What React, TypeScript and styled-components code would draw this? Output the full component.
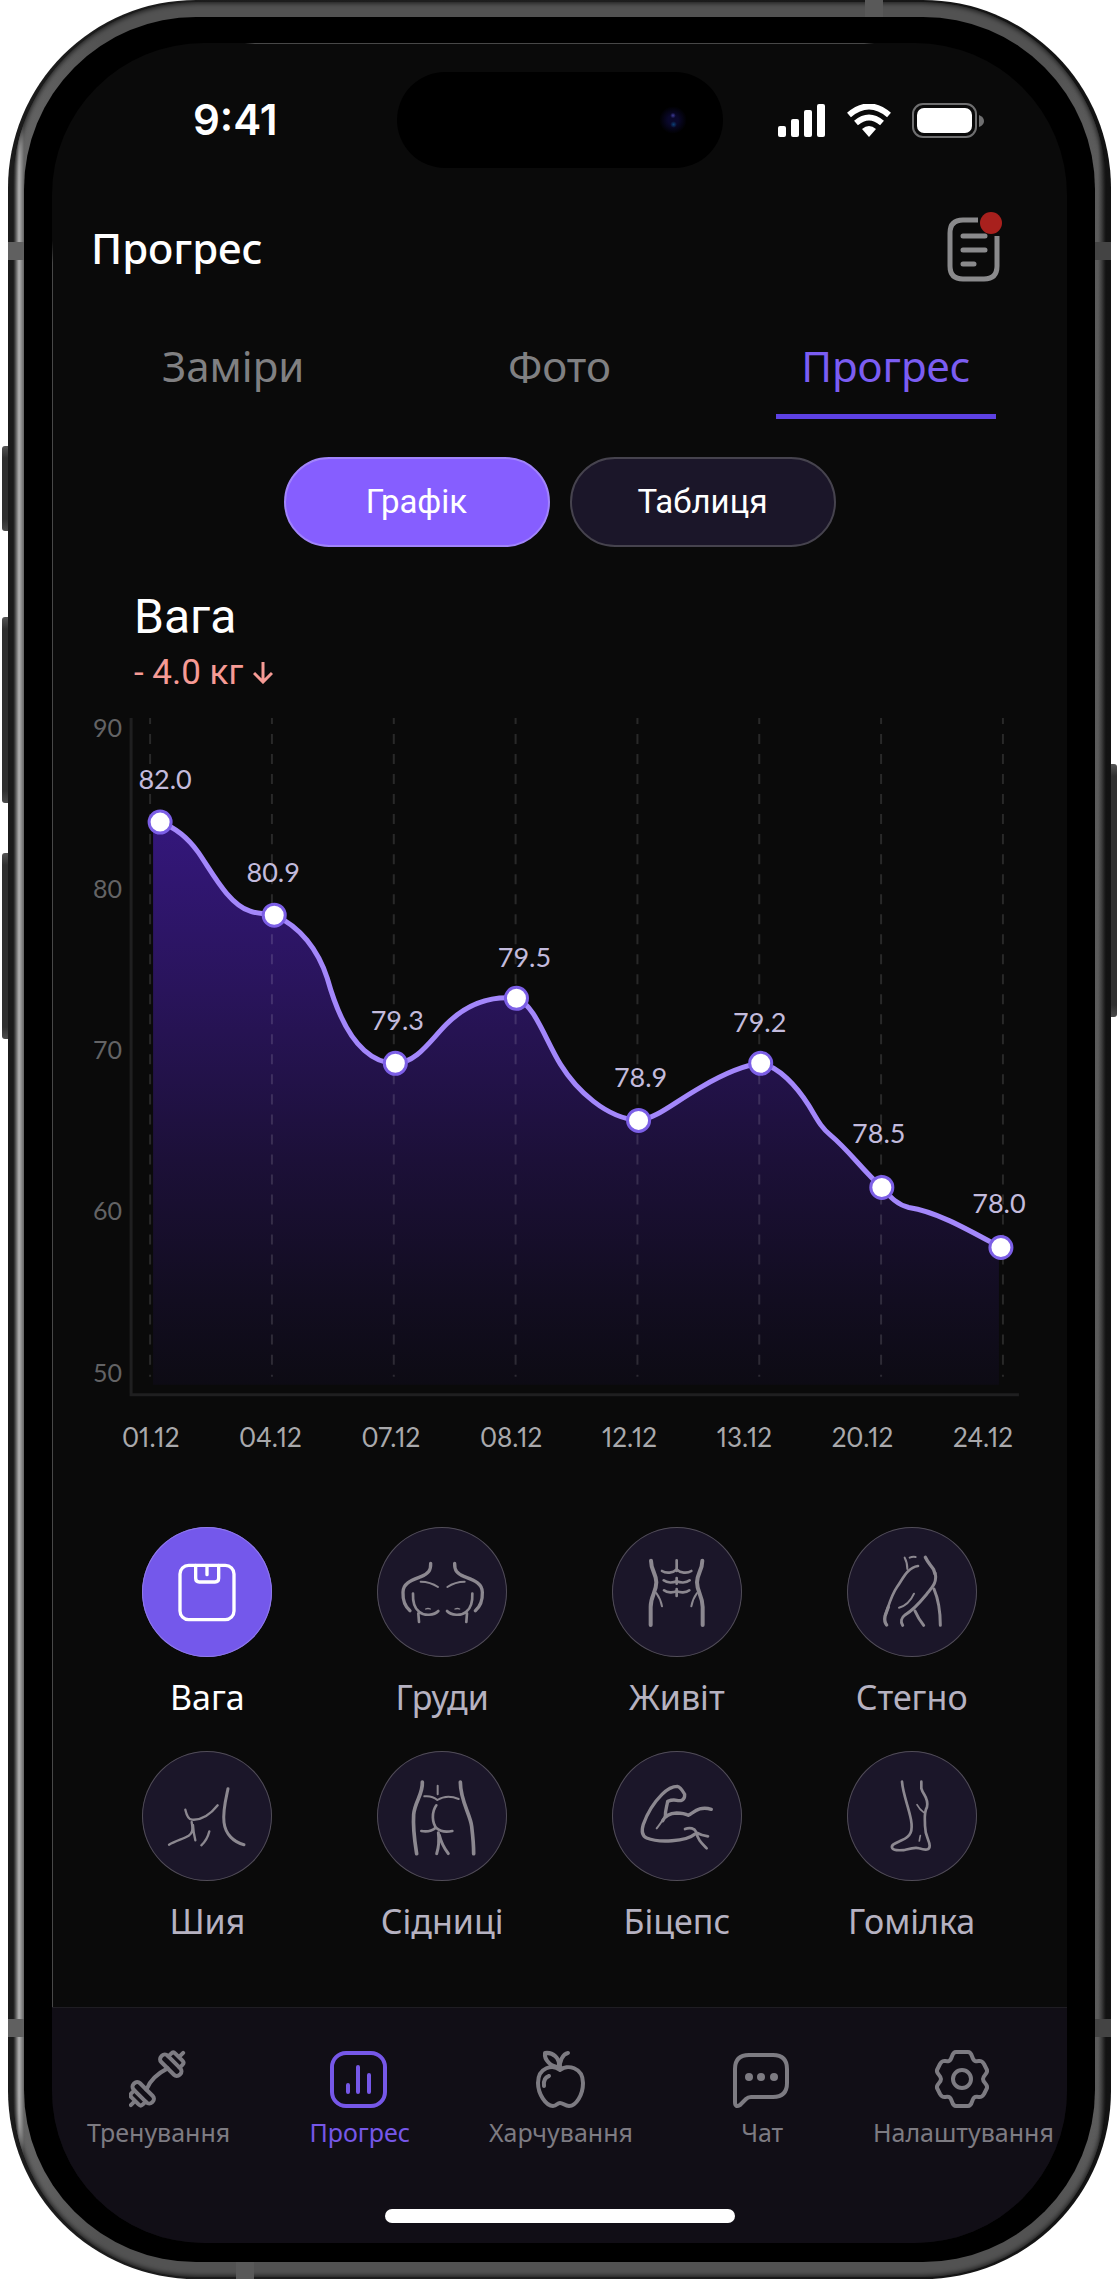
import React, { useState } from 'react';
import styled, { createGlobalStyle, css } from 'styled-components';

const noto = '"Noto Sans", "Open Sans", sans-serif';
const roboto = 'Roboto, "Noto Sans", sans-serif';
const numeric = 'Lato, Roboto, sans-serif';

const GlobalStyle = createGlobalStyle`
  *, *::before, *::after { box-sizing: border-box; }
  body { margin: 0; background: #fff; font-family: ${noto}; }
  button { font: inherit; color: inherit; border: 0; padding: 0; background: none; cursor: pointer; }
  a { color: inherit; text-decoration: none; }
  svg { display: block; }
`;

/* ---------- device ---------- */

const Device = styled.div`
  position: relative;
  margin: 0 auto;
  padding: 0 8px;
  max-width: 1119px;
`;

const Frame = styled.div`
  position: relative;
  padding: 2px 5px;
  border-radius: 188px;
  background: linear-gradient(90deg, #1b1b1b, #1f1f1f 50%, #121212);
`;

const Rail = styled.div`
  padding: 15px 11px;
  border-radius: 184px;
  background: linear-gradient(90deg, #2c2c2c 0, #b4b4b4 6px, #646464 11px, #525252 90px, #525252 calc(100% - 60px), #5c5c5c calc(100% - 8px), #222);
  box-shadow: inset 0 0 5px 1px rgba(0, 0, 0, 0.7);
`;

const Bezel = styled.div`
  padding: 26px 28px 19px;
  border-radius: 172px;
  background: #000;
`;

const Screen = styled.main`
  display: flex;
  flex-direction: column;
  overflow: hidden;
  border-radius: 152px;
  color: #fff;
  background:
    linear-gradient(90deg, transparent 19%, #484848 20%, #484848 80%, transparent 81%) top / 100% 1px no-repeat,
    linear-gradient(180deg, transparent 9%, #484848 10%, #484848 90%, transparent 91%) left / 1px 100% no-repeat,
    #0a0a0a;
`;

const SideKey = styled.i<{ $side: 'left' | 'right'; $top: number; $length: number }>`
  position: absolute;
  ${(p) => p.$side}: 2px;
  top: ${(p) => p.$top}px;
  width: 6px;
  height: ${(p) => p.$length}px;
  border-radius: ${(p) => (p.$side === 'left' ? '3px 0 0 3px' : '0 3px 3px 0')};
  background: linear-gradient(180deg, #555, #303030 12px, #303030 calc(100% - 12px), #4a4a4a);
`;

const SideBand = styled.i<{ $side: 'left' | 'right'; $from: 'top' | 'bottom' }>`
  position: absolute;
  ${(p) => p.$side}: 0;
  ${(p) => p.$from}: 242px;
  width: 16px;
  height: 18px;
  background: ${(p) => (p.$side === 'left' ? '#606060' : '#444')};
`;

const EdgeBand = styled.i<{ $side: 'left' | 'right'; $from: 'top' | 'bottom' }>`
  position: absolute;
  ${(p) => p.$side}: 228px;
  ${(p) => p.$from}: 0;
  width: 18px;
  height: 17px;
  background: #595959;
`;

/* ---------- status bar ---------- */

const StatusBar = styled.div`
  display: grid;
  grid-template-columns: 1fr 326px 1fr;
  align-items: center;
  margin-top: 29px;
`;

const Clock = styled.time`
  padding-left: 22px;
  text-align: center;
  font: 600 42px/48px Inter, sans-serif;
`;

const Island = styled.div`
  display: flex;
  justify-content: flex-end;
  align-items: center;
  height: 96px;
  padding-right: 36px;
  border-radius: 48px;
  background: #000;
`;

const Lens = styled.i`
  width: 28px;
  height: 28px;
  border-radius: 50%;
  background:
    radial-gradient(circle at 50% 34%, #3d3b94 0, transparent 12%),
    radial-gradient(circle at 52% 66%, #0b3f74 0, transparent 14%),
    radial-gradient(circle, #0a082c 25%, #000 70%);
`;

const StatusIcons = styled.div`
  display: flex;
  justify-content: center;
  align-items: center;
  gap: 20px;
  padding-right: 28px;
`;

/* ---------- header, tabs, switch ---------- */

const Header = styled.header`
  display: flex;
  justify-content: space-between;
  align-items: center;
  height: 80px;
  margin-top: 40px;
  padding: 0 62px 0 39px;
`;

const Title = styled.h1`
  margin: 0;
  font: 500 42px/56px ${noto};
`;

const Tabs = styled.nav`
  display: grid;
  grid-template-columns: repeat(3, 1fr);
  justify-items: center;
  margin-top: 50px;
  padding: 0 18px;
`;

const Tab = styled.button<{ $active: boolean }>`
  width: 220px;
  padding-bottom: 20px;
  border-bottom: 5px solid transparent;
  font: 400 42px/56px ${noto};
  color: #808082;
  ${(p) => p.$active && css`
    color: #7b5df2;
    border-image: linear-gradient(#5d41e4, #5d41e4) 1;
  `}
`;

const Switch = styled.div`
  display: flex;
  justify-content: center;
  gap: 20px;
  margin-top: 38px;
`;

const SwitchButton = styled.button<{ $active: boolean }>`
  width: 266px;
  height: 90px;
  border: 2px solid ${(p) => (p.$active ? '#a184fb' : '#46434e')};
  border-radius: 45px;
  background: ${(p) => (p.$active ? '#865eff' : '#1b1629')};
  font: 400 33px/40px ${roboto};
  color: #fff;
`;

/* ---------- chart ---------- */

const Summary = styled.section`
  margin-top: 42px;
  padding: 0 82px;
`;

const Metric = styled.h2`
  margin: 0;
  font: 400 48px/56px ${roboto};
`;

const Delta = styled.p`
  display: flex;
  align-items: center;
  gap: 10px;
  margin: 8px 0 0;
  font: 400 35px/40px ${roboto};
  color: #f69b95;
`;

const ChartSvg = styled.svg`
  width: 100%;
  height: auto;
  margin-top: 15px;
  font-family: ${numeric};
`;

const AxisText = styled.text`
  font-size: 25px;
  fill: #636365;
`;

const ValueText = styled.text`
  font-size: 27px;
  text-anchor: middle;
  fill: #c3bbdd;
`;

const Dates = styled.div`
  display: flex;
  justify-content: space-between;
  margin-top: 20px;
  padding: 0 54px 0 70px;
  font: 400 26px/32px ${numeric};
  font-variant-numeric: proportional-nums;
  color: #a9a9ac;
`;

/* ---------- body parts ---------- */

const Parts = styled.section`
  display: grid;
  grid-template-columns: repeat(4, 1fr);
  row-gap: 34px;
  margin-top: 74px;
  padding: 0 38px;
`;

const Part = styled.button<{ $active: boolean }>`
  display: flex;
  flex-direction: column;
  align-items: center;
  gap: 20px;
  font: 400 34px/40px ${noto};
  color: ${(p) => (p.$active ? '#fff' : '#b6b2c1')};
`;

const Disc = styled.span<{ $active: boolean }>`
  width: 130px;
  height: 130px;
  border-radius: 50%;
  background: ${(p) => (p.$active ? '#7458eb' : '#1b1629')};
  box-shadow: inset 0 0 0 1px ${(p) => (p.$active ? '#907be8' : '#514d57')};
  color: ${(p) => (p.$active ? '#fff' : '#8c8890')};
`;

/* ---------- bottom bar ---------- */

const BottomBar = styled.footer`
  margin-top: 66px;
  padding: 41px 0 20px;
  border-top: 1px solid #1f1d23;
  background: #110e16;
`;

const NavList = styled.nav`
  display: grid;
  grid-template-columns: repeat(5, 1fr);
  padding: 0 3px 0 6px;
`;

const NavItem = styled.a<{ $active: boolean }>`
  display: flex;
  flex-direction: column;
  align-items: center;
  gap: 7px;
  font: 400 25px/32px ${noto};
  color: ${(p) => (p.$active ? '#7657e8' : '#7d7b82')};
`;

const HomeIndicator = styled.div`
  width: 350px;
  height: 14px;
  margin: 61px auto 0;
  border-radius: 7px;
  background: #fff;
`;

/* ---------- data ---------- */

const points = [
  { x: 160, y: 822, lx: 165, ly: 789, v: '82.0' },
  { x: 274, y: 915, lx: 273, ly: 882, v: '80.9' },
  { x: 395, y: 1063, lx: 397, ly: 1030, v: '79.3' },
  { x: 516, y: 998, lx: 524, ly: 967, v: '79.5' },
  { x: 638, y: 1120, lx: 640, ly: 1087, v: '78.9' },
  { x: 760, y: 1063, lx: 759, ly: 1032, v: '79.2' },
  { x: 881, y: 1187, lx: 878, ly: 1143, v: '78.5' },
  { x: 1000, y: 1247, lx: 998, ly: 1213, v: '78.0' },
];

const dates = ['01.12', '04.12', '07.12', '08.12', '12.12', '13.12', '20.12', '24.12'];

const curve =
  'C174 827 188 838 198 852 C212 872 228 904 250 911 C258 914 266 913 274 915 ' +
  'C300 926 318 950 327 978 C336 1010 348 1036 364 1050 C374 1059 384 1063 395 1063 ' +
  'C416 1063 430 1040 446 1024 C464 1006 486 995 516 998 ' +
  'C534 1004 545 1040 560 1064 C576 1090 606 1118 638 1120 ' +
  'C656 1118 672 1103 700 1087 C724 1073 742 1065 760 1063 ' +
  'C778 1066 796 1086 808 1105 C816 1118 820 1127 830 1135 C848 1150 862 1170 881 1187 ' +
  'C890 1197 896 1204 908 1207 C935 1211 965 1228 1000 1247';

function Chart() {
  return (
    <ChartSvg viewBox="52 708 1014 692" role="img" aria-label="Вага">
      <defs>
        <linearGradient id="area" gradientUnits="userSpaceOnUse" x1="0" y1="822" x2="0" y2="1384">
          <stop offset="0" stopColor="#34177c" />
          <stop offset="0.3" stopColor="#29145b" />
          <stop offset="0.6" stopColor="#1c1038" />
          <stop offset="0.85" stopColor="#120d20" />
          <stop offset="1" stopColor="#0d0b14" />
        </linearGradient>
      </defs>
      <path d={`M153 822 H160 ${curve} H998 V1384 H153 Z`} fill="url(#area)" />
      <path d="M131 718 V1394 H1018" fill="none" stroke="#1f1f20" strokeWidth="3" />
      {points.map((p, i) => (
        <line
          key={p.v}
          x1={150 + (i * 852) / 7}
          x2={150 + (i * 852) / 7}
          y1="718"
          y2="1376"
          stroke="#fff"
          strokeOpacity="0.13"
          strokeWidth="2"
          strokeDasharray="10 10"
          strokeDashoffset="4"
        />
      ))}
      <path d={`M160 822 ${curve}`} fill="none" stroke="#a387fb" strokeWidth="5" />
      {points.map((p) => (
        <circle key={p.v} cx={p.x} cy={p.y} r="11" fill="#fff" stroke="#7c5fe6" strokeWidth="3" />
      ))}
      {[90, 80, 70, 60, 50].map((n, i) => (
        <AxisText key={n} x="93" y={737 + i * 161}>{n}</AxisText>
      ))}
      {points.map((p) => (
        <ValueText key={p.v} x={p.lx} y={p.ly}>{p.v}</ValueText>
      ))}
    </ChartSvg>
  );
}

/* ---------- icons ---------- */

function Glyph({ width = 8, children }: { width?: number; children: React.ReactNode }) {
  return (
    <svg viewBox="0 0 390 390" width="130" height="130" fill="none" stroke="currentColor"
      strokeWidth={width} strokeLinecap="round" strokeLinejoin="round" aria-hidden="true">
      {children}
    </svg>
  );
}

const Mirror = ({ sum, children }: { sum: number; children: React.ReactNode }) => (
  <>
    <g>{children}</g>
    <g transform={`translate(${sum} 0) scale(-1 1)`}>{children}</g>
  </>
);

const parts = [
  {
    name: 'Вага',
    icon: (
      <Glyph width={10}>
        <rect x="114" y="115" width="162" height="163" rx="26" />
        <path d="M161 115V154Q161 165 172 165H219Q230 165 230 154V115M195 117V143" />
      </Glyph>
    ),
  },
  {
    name: 'Груди',
    icon: (
      <Glyph>
        <Mirror sum={394}>
          <path strokeWidth="10" d="M161 109C162 130 154 140 132 149C104 160 78 168 78 196C77 220 86 240 99 251" />
          <path strokeWidth="6" d="M131 164C150 164 170 171 183 180" />
          <path d="M108 200C107 225 114 245 126 254C142 268 172 265 184 252M124 259L126 285" />
          <path strokeWidth="4" d="M146 246Q153 243 160 246" />
        </Mirror>
      </Glyph>
    ),
  },
  {
    name: 'Живіт',
    icon: (
      <Glyph>
        <Mirror sum={388}>
          <path strokeWidth="12" d="M117 101C117 130 133 140 133 166C133 196 116 205 116 240V294" />
          <path strokeWidth="6" d="M133 198Q146 216 150 238" />
          <path d="M150 132C162 140 184 138 193 128M155 160C166 169 184 167 194 163M156 190C166 198 184 197 194 193" />
        </Mirror>
        <path d="M194 100V132M194 153V170M194 186V207" />
      </Glyph>
    ),
  },
  {
    name: 'Стегно',
    icon: (
      <Glyph>
        <path strokeWidth="6" d="M173 92Q181 106 181 126M188 92Q197 88 206 90M156 242C180 236 192 220 201 200" />
        <path d="M213 117C180 122 168 155 150 180C132 206 124 240 115 264" />
        <path strokeWidth="10" d="M124 240Q118 256 114 268Q111 284 119 294M235 91C243 108 253 116 260 128L264 140" />
        <path strokeWidth="9" d="M264 138C272 165 255 182 240 200C225 218 205 245 175 263C163 272 160 285 167 295" />
        <path strokeWidth="9" d="M261 186C272 212 280 250 280 295M204 252Q214 275 230 295" />
      </Glyph>
    ),
  },
  {
    name: 'Шия',
    icon: (
      <Glyph width={7}>
        <path strokeWidth="9" d="M258 113C250 150 242 180 246 214C250 250 276 274 306 281" />
        <path d="M130 176C134 194 140 205 150 206C176 208 204 192 227 163" />
        <path d="M149 213C153 236 152 246 140 254C124 264 102 268 81 281M153 222C154 242 156 252 160 268M202 241C198 258 188 274 178 283" />
      </Glyph>
    ),
  },
  {
    name: 'Сідниці',
    icon: (
      <Glyph>
        <path strokeWidth="11" d="M136 93C138 130 114 150 110 190C107 235 113 270 119 308M250 93C250 150 280 190 284 226C288 260 290 280 290 308" />
        <path strokeWidth="6" d="M182 104V130M142 136C160 134 172 139 181 147C198 136 222 134 245 144" />
        <path d="M178 163C163 184 165 216 179 232C194 245 212 243 226 240M133 240C150 243 166 239 176 230" />
        <path strokeWidth="9" d="M184 245C187 270 185 290 179 308M187 252C192 274 202 292 214 308" />
      </Glyph>
    ),
  },
  {
    name: 'Біцепс',
    icon: (
      <Glyph width={10}>
        <path d="M249 249C222 272 140 276 104 261C88 254 88 240 94 220C106 186 128 152 150 130C166 114 182 106 196 106C206 108 212 120 218 130C219 148 206 151 194 148Q182 145 167 151C164 170 159 180 160 196" />
        <path d="M152 209C160 192 176 187 194 186C210 186 220 188 229 193C246 184 262 164 298 175" />
        <path strokeWidth="6" d="M134 232Q144 220 158 198" />
        <path strokeWidth="8" d="M219 234C234 228 248 232 252 242C258 268 268 276 284 292M256 246Q268 253 288 256" />
      </Glyph>
    ),
  },
  {
    name: 'Гомілка',
    icon: (
      <Glyph>
        <path d="M165 92C168 130 184 165 192 206C198 240 192 256 164 268C146 276 132 280 135 290C138 300 158 298 173 297C192 292 204 288 216 292C236 298 248 298 248 284C248 268 234 256 234 224C234 200 230 186 240 168C246 140 228 132 223 112V92" />
        <path strokeWidth="5" d="M210 161Q218 176 230 184M220 254Q218 262 217 270" />
      </Glyph>
    ),
  },
];

function NavIcon({ children }: { children: React.ReactNode }) {
  return (
    <svg viewBox="0 0 60 60" width="60" height="60" fill="none" stroke="currentColor"
      strokeWidth="4" strokeLinecap="round" strokeLinejoin="round" aria-hidden="true">
      {children}
    </svg>
  );
}

const weightHalf = (
  <>
    <rect x="15" y="-13" width="9" height="26" rx="4" />
    <path d="M24 -8H28Q31 -8 31 -5V5Q31 8 28 8H24M31 0H37" />
  </>
);

const gearHalf = 'M0 -27H6C11 -27 9 -20 13 -18C17 -17 19 -20 22 -15L25 -9C26 -5 21 -4 21 0C21 4 26 5 25 9L22 15C19 20 17 17 13 18C9 20 11 27 6 27H0';

const navItems = [
  {
    name: 'Тренування',
    icon: (
      <NavIcon>
        <g transform="translate(28 30) rotate(-45)">
          {weightHalf}
          <g transform="rotate(180)">{weightHalf}</g>
          <path d="M-15 0C-6 -4 6 -3 15 0" />
        </g>
      </NavIcon>
    ),
  },
  {
    name: 'Прогрес',
    icon: (
      <NavIcon>
        <rect x="2" y="4" width="53" height="53" rx="14" />
        <path d="M18 36V43M28 18V43M39 26V43" />
      </NavIcon>
    ),
  },
  {
    name: 'Харчування',
    icon: (
      <NavIcon>
        <path d="M29 21C22 15 7 18 7 34C7 45 15 57 22 57C26 57 26 54 29 54C32 54 34 57 38 57C45 57 52 46 52 34C52 18 36 15 29 21ZM29 20C28 12 32 5 37 4M28 18C20 18 13 11 14 4C22 3 29 9 28 18ZM13 37Q12 29 18 27" />
      </NavIcon>
    ),
  },
  {
    name: 'Чат',
    icon: (
      <NavIcon>
        <path d="M3 53V20Q3 6 17 6H41Q55 6 55 20V34Q55 48 41 48H19Q16 48 14 50L8 56Q3 59 3 53Z" />
        <g fill="currentColor" stroke="none">
          <circle cx="17" cy="28" r="4" />
          <circle cx="29" cy="28" r="4" />
          <circle cx="42" cy="28" r="4" />
        </g>
      </NavIcon>
    ),
  },
  {
    name: 'Налаштування',
    icon: (
      <NavIcon>
        <g transform="translate(29 30)">
          <path d={gearHalf} />
          <path d={gearHalf} transform="scale(-1 1)" />
          <circle r="9" />
        </g>
      </NavIcon>
    ),
  },
];

const NotesIcon = () => (
  <svg width="64" height="76" viewBox="0 0 64 76" fill="none" stroke="#8a8a8c" strokeWidth="5" strokeLinecap="round">
    <path d="M37 10H22Q9 10 9 23V56Q9 69 22 69H43Q56 69 56 56V26" strokeLinecap="butt" />
    <path d="M22 26H44M22 40H44M22 54H33" />
    <circle cx="50" cy="13" r="11" fill="#a8201d" stroke="none" />
  </svg>
);

const SignalIcon = () => (
  <svg width="48" height="33" viewBox="0 0 48 33" fill="#fff" aria-hidden="true">
    <rect x="0" y="22" width="8" height="11" rx="2" />
    <rect x="13" y="15" width="8" height="18" rx="2" />
    <rect x="26" y="6" width="8" height="27" rx="2" />
    <rect x="39" y="0" width="8" height="33" rx="2" />
  </svg>
);

const WifiIcon = () => (
  <svg width="46" height="33" viewBox="0 0 46 33" aria-hidden="true">
    <path d="M23 33L16 25Q23 19 30 25Z" fill="#fff" />
    <path d="M10 19Q23 8 36 19M3 11Q23 -6 43 11" fill="none" stroke="#fff" strokeWidth="6" />
  </svg>
);

const BatteryIcon = () => (
  <svg width="72" height="35" viewBox="0 0 72 35" aria-hidden="true">
    <rect x="1" y="1" width="63" height="33" rx="10" fill="none" stroke="#6f6f70" strokeWidth="2" />
    <rect x="5" y="5" width="55" height="25" rx="7" fill="#fff" />
    <path d="M67 12Q72 14 72 18Q72 22 67 24Z" fill="#6f6f70" />
  </svg>
);

export default function App() {
  const [tab, setTab] = useState('Прогрес');
  const [view, setView] = useState('Графік');
  const [part, setPart] = useState('Вага');

  return (
    <>
      <GlobalStyle />
      <Device>
        <SideKey $side="left" $top={446} $length={85} />
        <SideKey $side="left" $top={617} $length={186} />
        <SideKey $side="left" $top={853} $length={186} />
        <SideKey $side="right" $top={764} $length={253} />
        <Frame>
          <SideBand $side="left" $from="top" />
          <SideBand $side="right" $from="top" />
          <SideBand $side="left" $from="bottom" />
          <SideBand $side="right" $from="bottom" />
          <EdgeBand $side="right" $from="top" />
          <EdgeBand $side="left" $from="bottom" />
          <Rail>
            <Bezel>
              <Screen>
                <StatusBar>
                  <Clock>9:41</Clock>
                  <Island><Lens /></Island>
                  <StatusIcons>
                    <SignalIcon />
                    <WifiIcon />
                    <BatteryIcon />
                  </StatusIcons>
                </StatusBar>

                <Header>
                  <Title>Прогрес</Title>
                  <button type="button" aria-label="Нотатки"><NotesIcon /></button>
                </Header>

                <Tabs>
                  {['Заміри', 'Фото', 'Прогрес'].map((name) => (
                    <Tab key={name} type="button" $active={tab === name} onClick={() => setTab(name)}>{name}</Tab>
                  ))}
                </Tabs>

                <Switch>
                  {['Графік', 'Таблиця'].map((name) => (
                    <SwitchButton key={name} type="button" $active={view === name} onClick={() => setView(name)}>
                      {name}
                    </SwitchButton>
                  ))}
                </Switch>

                <Summary>
                  <Metric>Вага</Metric>
                  <Delta>
                    - 4.0 кг
                    <svg width="20" height="22" viewBox="0 0 20 22" fill="none" stroke="currentColor" strokeWidth="3" aria-hidden="true">
                      <path d="M10 0V20M1 11L10 20L19 11" />
                    </svg>
                  </Delta>
                </Summary>

                <Chart />
                <Dates>
                  {dates.map((d) => <span key={d}>{d}</span>)}
                </Dates>

                <Parts>
                  {parts.map(({ name, icon }) => (
                    <Part key={name} type="button" $active={part === name} onClick={() => setPart(name)}>
                      <Disc $active={part === name}>{icon}</Disc>
                      {name}
                    </Part>
                  ))}
                </Parts>

                <BottomBar>
                  <NavList>
                    {navItems.map(({ name, icon }) => (
                      <NavItem key={name} href="#" $active={name === 'Прогрес'}>
                        {icon}
                        {name}
                      </NavItem>
                    ))}
                  </NavList>
                  <HomeIndicator />
                </BottomBar>
              </Screen>
            </Bezel>
          </Rail>
        </Frame>
      </Device>
    </>
  );
}
